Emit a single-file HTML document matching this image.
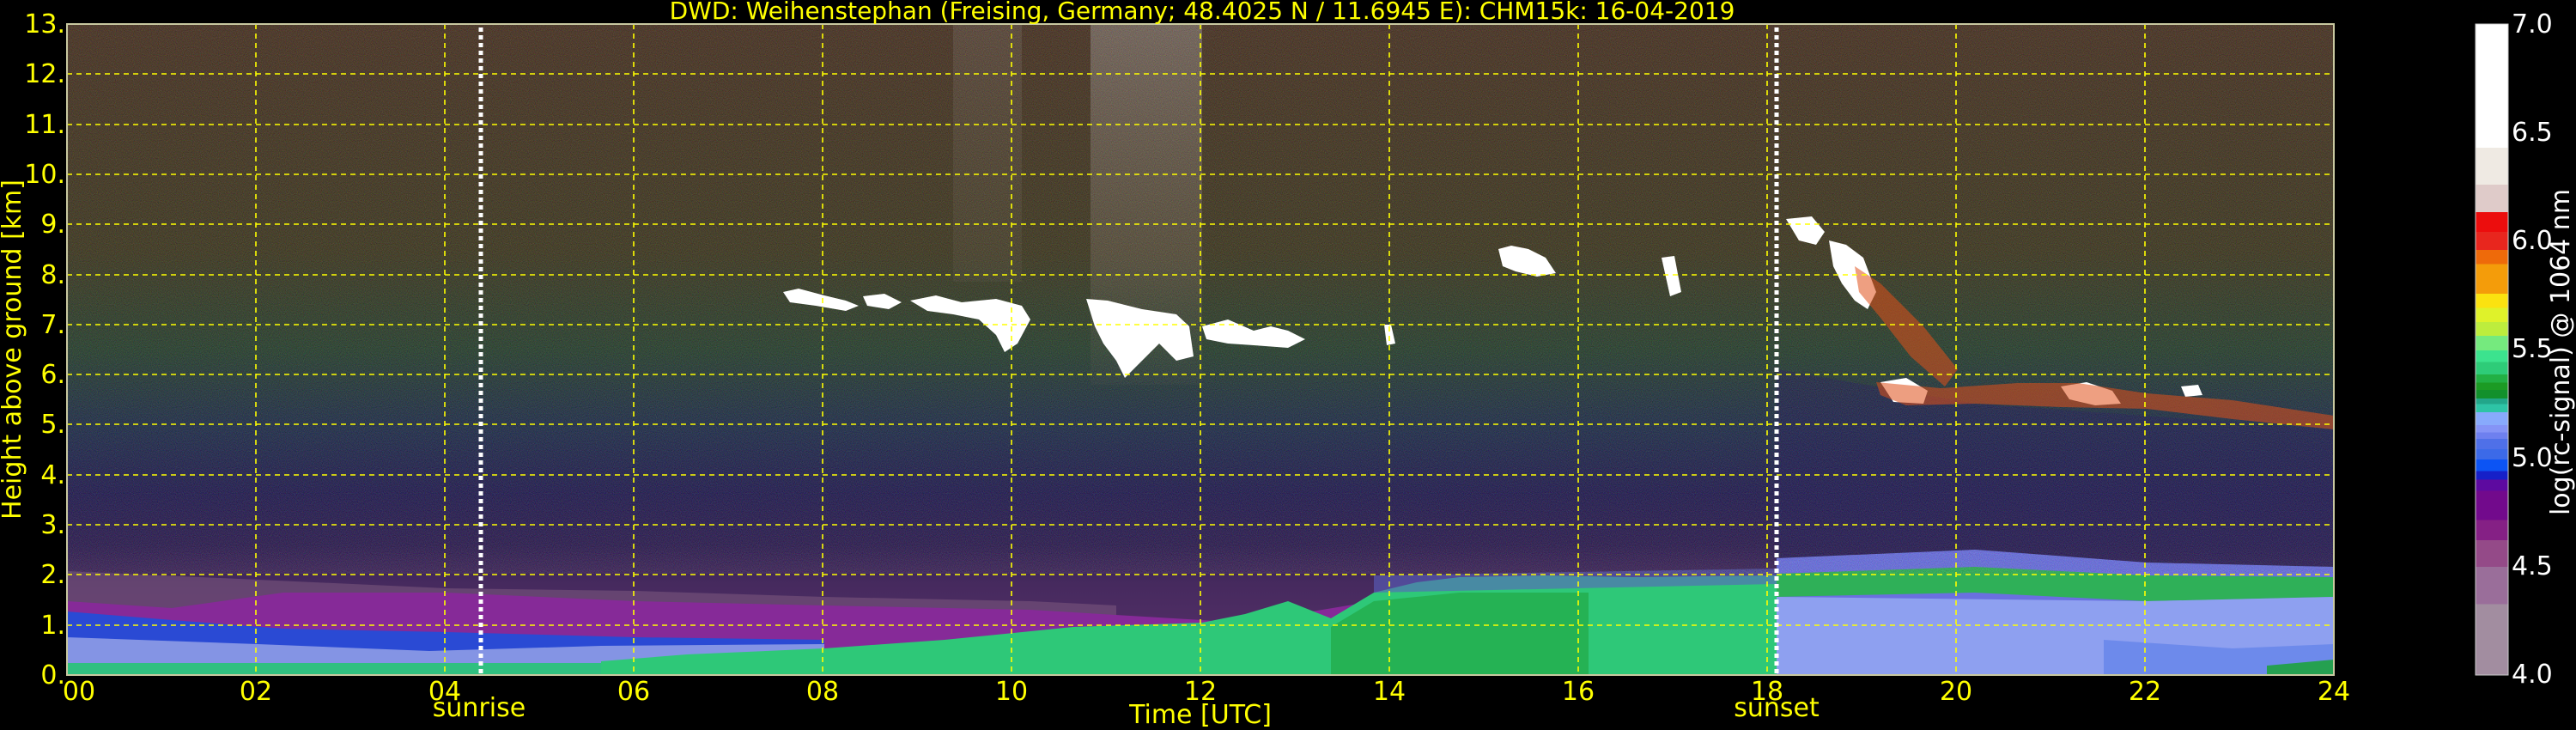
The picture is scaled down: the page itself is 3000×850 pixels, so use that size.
<!DOCTYPE html>
<html><head><meta charset="utf-8"><style>
html,body{margin:0;padding:0;background:#000;width:3000px;height:850px;overflow:hidden}
svg{display:block}
text{font-family:"DejaVu Sans","Liberation Sans",sans-serif}
</style></head><body>
<svg width="3000" height="850" viewBox="0 0 3000 850" xmlns="http://www.w3.org/2000/svg">
<defs>
<linearGradient id="bg" x1="0" y1="28" x2="0" y2="786" gradientUnits="userSpaceOnUse">
<stop offset="0" stop-color="#4a3424"/>
<stop offset="0.35" stop-color="#403a22"/>
<stop offset="0.5" stop-color="#2a4230"/>
<stop offset="0.62" stop-color="#22304c"/>
<stop offset="0.72" stop-color="#241e52"/>
<stop offset="0.8" stop-color="#2e1e52"/>
<stop offset="0.86" stop-color="#462a5e"/>
<stop offset="1" stop-color="#5a306c"/>
</linearGradient>
<linearGradient id="cb" x1="0" y1="0" x2="0" y2="1">
<stop offset="0" stop-color="#fff"/><stop offset=".19" stop-color="#fff"/>
<stop offset=".19" stop-color="#efeae3"/><stop offset=".247" stop-color="#efeae3"/>
<stop offset=".247" stop-color="#dfcbc9"/><stop offset=".289" stop-color="#dfcbc9"/>
<stop offset=".289" stop-color="#ec0d0d"/><stop offset=".319" stop-color="#ec0d0d"/>
<stop offset=".319" stop-color="#e8261e"/><stop offset=".347" stop-color="#e8261e"/>
<stop offset=".347" stop-color="#ee6a0a"/><stop offset=".369" stop-color="#ee6a0a"/>
<stop offset=".369" stop-color="#f49c0a"/><stop offset=".414" stop-color="#f49c0a"/>
<stop offset=".414" stop-color="#fbe210"/><stop offset=".436" stop-color="#fbe210"/>
<stop offset=".436" stop-color="#dff22a"/><stop offset=".458" stop-color="#dff22a"/>
<stop offset=".458" stop-color="#bded3d"/><stop offset=".479" stop-color="#bded3d"/>
<stop offset=".479" stop-color="#75ea7e"/><stop offset=".501" stop-color="#75ea7e"/>
<stop offset=".501" stop-color="#3ce38e"/><stop offset=".519" stop-color="#3ce38e"/>
<stop offset=".519" stop-color="#2ecc78"/><stop offset=".538" stop-color="#2ecc78"/>
<stop offset=".538" stop-color="#22b044"/><stop offset=".551" stop-color="#22b044"/>
<stop offset=".551" stop-color="#1c9b24"/><stop offset=".562" stop-color="#1c9b24"/>
<stop offset=".562" stop-color="#12902c"/><stop offset=".575" stop-color="#12902c"/>
<stop offset=".575" stop-color="#22a68a"/><stop offset=".584" stop-color="#22a68a"/>
<stop offset=".584" stop-color="#2ec4a6"/><stop offset=".596" stop-color="#2ec4a6"/>
<stop offset=".596" stop-color="#88aafc"/><stop offset=".616" stop-color="#88aafc"/>
<stop offset=".616" stop-color="#8594f6"/><stop offset=".627" stop-color="#8594f6"/>
<stop offset=".627" stop-color="#6e80ef"/><stop offset=".637" stop-color="#6e80ef"/>
<stop offset=".637" stop-color="#4f70e8"/><stop offset=".653" stop-color="#4f70e8"/>
<stop offset=".653" stop-color="#3c6ae8"/><stop offset=".669" stop-color="#3c6ae8"/>
<stop offset=".669" stop-color="#0c54f4"/><stop offset=".687" stop-color="#0c54f4"/>
<stop offset=".687" stop-color="#1620c8"/><stop offset=".7" stop-color="#1620c8"/>
<stop offset=".7" stop-color="#5d0aa0"/><stop offset=".717" stop-color="#5d0aa0"/>
<stop offset=".717" stop-color="#720a8c"/><stop offset=".762" stop-color="#720a8c"/>
<stop offset=".762" stop-color="#852085"/><stop offset=".793" stop-color="#852085"/>
<stop offset=".793" stop-color="#944a88"/><stop offset=".834" stop-color="#944a88"/>
<stop offset=".834" stop-color="#9a6e9a"/><stop offset=".891" stop-color="#9a6e9a"/>
<stop offset=".891" stop-color="#a28da0"/><stop offset="1" stop-color="#a28da0"/>
</linearGradient>
<filter id="nz" x="0" y="0" width="100%" height="100%" color-interpolation-filters="sRGB">
<feTurbulence type="fractalNoise" baseFrequency="1.1" numOctaves="1" seed="4"/>
<feColorMatrix type="matrix" values="3 0 0 0 -1  0 3 0 0 -1  0 0 3 0 -1  0 0 0 0 1"/>
</filter>
<linearGradient id="wb" x1="0" y1="28" x2="0" y2="500" gradientUnits="userSpaceOnUse">
<stop offset="0" stop-color="#a8a29e" stop-opacity=".45"/><stop offset=".6" stop-color="#8a7a70" stop-opacity=".3"/><stop offset="1" stop-color="#6a5a50" stop-opacity="0"/>
</linearGradient>
</defs>

<rect x="78" y="28" width="2640" height="758" fill="url(#bg)"/>
<rect x="1270" y="28" width="130" height="420" fill="url(#wb)"/>
<rect x="1110" y="28" width="80" height="300" fill="url(#wb)" opacity=".4"/>
<polygon points="2069,430 2300,470 2718,500 2718,700 2069,700" fill="#241e58" opacity=".5"/>

<polygon points="78,665 300,675 520,685 740,688 960,695 1200,700 1300,705 1300,760 78,760" fill="#7e5a80" opacity=".55"/>
<polygon points="78,700 200,708 330,690 520,690 740,700 960,705 1200,710 1450,725 1600,700 1600,786 78,786" fill="#862a98"/>
<polygon points="78,712 200,722 330,732 520,736 740,742 960,745 960,786 78,786" fill="#2a4ad4"/>
<polygon points="78,742 300,750 500,758 700,752 960,750 960,786 78,786" fill="#8494e4"/>
<polygon points="78,772 960,772 960,786 78,786" fill="#30c080"/>
<polygon points="700,770 800,762 960,755 1100,745 1250,730 1400,725 1450,715 1500,700 1550,720 1600,690 1650,678 1700,672 1800,670 1900,672 2069,670 2069,786 700,786" fill="#2ec878"/>
<polygon points="1550,730 1600,700 1700,690 1850,690 1850,786 1550,786" fill="#22a844" opacity=".7"/>
<polygon points="1600,670 2069,662 2069,680 1600,690" fill="#5a60c0" opacity=".6"/>
<polygon points="2069,650 2300,640 2500,655 2718,660 2718,786 2069,786" fill="#6a70e0"/>
<polygon points="2069,668 2300,660 2500,670 2718,672 2718,695 2500,700 2300,690 2069,695" fill="#2fb058"/>
<polygon points="2069,695 2500,700 2718,695 2718,786 2069,786" fill="#8ea0f0"/>
<polygon points="2450,745 2600,755 2718,750 2718,786 2450,786" fill="#6080e8" opacity=".7"/>
<polygon points="2640,775 2718,768 2718,786 2640,786" fill="#25a050"/>

<rect x="78" y="28" width="2640" height="640" filter="url(#nz)" opacity=".12"/>

<g fill="#fff">
<path d="M912,340 L930,336 960,344 985,350 1000,356 985,362 950,356 920,352 Z"/>
<path d="M1005,345 L1030,342 1050,352 1035,360 1010,356Z"/>
<path d="M1060,350 L1090,344 1120,352 1160,348 1190,356 1200,372 1185,400 1170,410 1160,390 1140,372 1110,366 1080,362Z"/>
<path d="M1265,348 L1290,350 1330,360 1370,366 1385,380 1390,415 1370,420 1350,400 1330,420 1310,440 1300,420 1285,400 1275,380Z"/>
<path d="M1400,380 L1430,372 1460,385 1480,380 1500,385 1520,395 1500,405 1460,402 1430,400 1405,395Z"/>
<path d="M1612,378 L1620,378 1625,400 1615,402Z"/>
<path d="M1745,290 L1760,286 1780,290 1800,300 1812,318 1790,322 1765,316 1750,310Z"/>
<path d="M1935,300 L1950,298 1958,340 1945,345Z"/>
<path d="M2080,255 L2110,252 2125,270 2115,285 2095,280Z"/>
<path d="M2130,280 L2150,285 2170,300 2185,340 2175,360 2160,350 2145,330 2135,310Z"/>
<path d="M2190,445 L2220,440 2245,455 2240,470 2205,468Z"/>
<path d="M2400,450 L2430,445 2460,455 2470,470 2440,472 2410,465Z"/>
<path d="M2540,450 L2560,448 2565,460 2545,462Z"/>
</g>
<g fill="#e0501a" opacity=".55">
<path d="M2160,310 L2190,330 2240,380 2280,430 2265,450 2225,415 2190,370 2165,340Z"/>
<path d="M2185,445 L2260,452 2350,446 2420,446 2500,458 2600,466 2718,484 2718,500 2600,488 2500,476 2400,474 2300,470 2220,472 2190,460Z"/>
</g>

<g stroke="#ffff00" stroke-width="1.6" stroke-dasharray="6,5" fill="none">
<path d="M78,728H2718M78,669H2718M78,611H2718M78,553H2718M78,494H2718M78,436H2718M78,378H2718M78,320H2718M78,261H2718M78,203H2718M78,145H2718M78,86H2718"/>
<path d="M298,28V786M518,28V786M738,28V786M958,28V786M1178,28V786M1398,28V786M1618,28V786M1838,28V786M2058,28V786M2278,28V786M2498,28V786"/>
</g>
<g stroke="#ffffff" stroke-width="5" stroke-dasharray="5,4">
<path d="M560,32V786M2069,32V786"/>
</g>
<rect x="78" y="28" width="2640" height="758" fill="none" stroke="#c8c8a0" stroke-width="2"/>

<g fill="#ffff00" font-size="30" text-anchor="end">
<text x="76" y="796">0.</text><text x="76" y="738">1.</text><text x="76" y="679">2.</text><text x="76" y="621">3.</text>
<text x="76" y="563">4.</text><text x="76" y="504">5.</text><text x="76" y="446">6.</text><text x="76" y="388">7.</text>
<text x="76" y="330">8.</text><text x="76" y="271">9.</text><text x="76" y="213">10.</text><text x="76" y="155">11.</text>
<text x="76" y="96">12.</text><text x="76" y="38">13.</text>
</g>
<g fill="#ffff00" font-size="30" text-anchor="middle">
<text x="92" y="815">00</text><text x="298" y="815">02</text><text x="518" y="815">04</text><text x="738" y="815">06</text>
<text x="958" y="815">08</text><text x="1178" y="815">10</text><text x="1398" y="815">12</text><text x="1618" y="815">14</text>
<text x="1838" y="815">16</text><text x="2058" y="815">18</text><text x="2278" y="815">20</text><text x="2498" y="815">22</text>
<text x="2718" y="815">24</text>
<text x="558" y="834">sunrise</text>
<text x="1398" y="842">Time [UTC]</text>
<text x="2069" y="834">sunset</text>
<text x="1400" y="22" font-size="28">DWD: Weihenstephan (Freising, Germany; 48.4025 N / 11.6945 E):    CHM15k: 16-04-2019</text>
<text transform="translate(24,407) rotate(-90)" font-size="30">Height above ground [km]</text>
</g>

<rect x="2883" y="28" width="38" height="758" fill="url(#cb)" stroke="#ccc" stroke-width="1"/>
<g fill="#fff" font-size="30">
<text x="2925" y="38">7.0</text><text x="2925" y="164">6.5</text><text x="2925" y="290">6.0</text>
<text x="2925" y="416">5.5</text><text x="2925" y="543">5.0</text><text x="2925" y="669">4.5</text><text x="2925" y="795">4.0</text>
<text transform="translate(2992,410) rotate(-90)" text-anchor="middle" font-size="30">log(rc-signal) @ 1064 nm</text>
</g>
</svg>
</body></html>
